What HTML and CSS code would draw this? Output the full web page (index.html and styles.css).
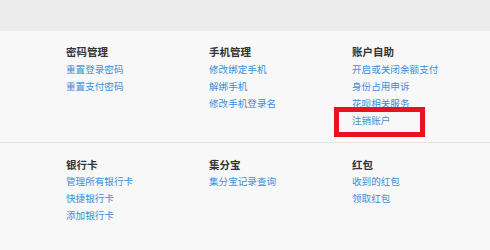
FILE: index.html
```html
<!DOCTYPE html>
<html lang="zh-CN">
<head>
    <meta charset="UTF-8">
    <meta name="viewport" content="width=device-width, initial-scale=1.0">
    <title>账户设置</title>
    <link rel="stylesheet" href="styles.css">
</head>
<body>

<div class="top-bar"></div>

<div class="section">
    <div class="group">
        <h3 class="group-title">密码管理</h3>
        <a class="group-link" href="#">重置登录密码</a>
        <a class="group-link" href="#">重置支付密码</a>
    </div>
    <div class="group">
        <h3 class="group-title">手机管理</h3>
        <a class="group-link" href="#">修改绑定手机</a>
        <a class="group-link" href="#">解绑手机</a>
        <a class="group-link" href="#">修改手机登录名</a>
    </div>
    <div class="group">
        <h3 class="group-title">账户自助</h3>
        <a class="group-link" href="#">开启或关闭余额支付</a>
        <a class="group-link" href="#">身份占用申诉</a>
        <a class="group-link" href="#">花呗相关服务</a>
        <a class="group-link marked" href="#">注销账户<span class="mark-box"></span></a>
    </div>
</div>

<div class="section section-bottom">
    <div class="group">
        <h3 class="group-title">银行卡</h3>
        <a class="group-link" href="#">管理所有银行卡</a>
        <a class="group-link" href="#">快捷银行卡</a>
        <a class="group-link" href="#">添加银行卡</a>
    </div>
    <div class="group">
        <h3 class="group-title">集分宝</h3>
        <a class="group-link" href="#">集分宝记录查询</a>
    </div>
    <div class="group">
        <h3 class="group-title">红包</h3>
        <a class="group-link" href="#">收到的红包</a>
        <a class="group-link" href="#">领取红包</a>
    </div>
</div>

</body>
</html>
```

FILE: styles.css
```css
body {
    margin: 0;
    background: #f8f8f8;
    font-family: "Noto Sans CJK SC", "Noto Sans", sans-serif;
    font-size: 10px;
    height: 250px;
    overflow: hidden;
}
.top-bar {
    height: 31px;
    background: #ececed;
}
.section {
    display: grid;
    grid-template-columns: 143px 143px 143px;
    align-items: start;
    padding: 12px 0 13px 66px;
    border-bottom: 1px solid #e4e4e4;
}
.section-bottom {
    border-bottom: none;
    padding-top: 13px;
}
.group {
    display: flex;
    flex-direction: column;
}
.group-title {
    margin: 0;
    font-size: 10.5px;
    font-weight: bold;
    line-height: 17px;
    color: #333;
}
.group-link {
    font-size: 9.6px;
    line-height: 17px;
    color: #3b8ed8;
    text-decoration: none;
    width: max-content;
}
.group-title + .group-link {
    margin-top: 0.5px;
}
.marked {
    position: relative;
}
.mark-box {
    position: absolute;
    left: -18px;
    top: -5px;
    width: 81px;
    height: 20px;
    border: 5px solid #e8131f;
}
```
